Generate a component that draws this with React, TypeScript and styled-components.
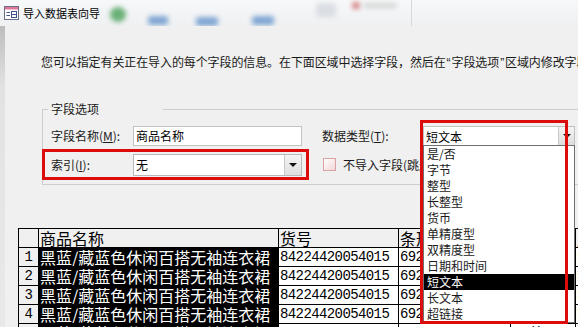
import { FC } from 'react';
import styled, { createGlobalStyle } from 'styled-components';

const GlobalStyle = createGlobalStyle`
  html, body {
    margin: 0;
    padding: 0;
  }
  body {
    background: #f0f0f0;
    font-family: 'Noto Sans CJK SC', 'Liberation Sans', sans-serif;
    color: #000;
  }
`;

const Window = styled.div`
  width: 578px;
  height: 327px;
  overflow: hidden;
  display: flex;
  flex-direction: column;
  background: #f0f0f0;
`;

const TitleBar = styled.div`
  height: 26px;
  flex: none;
  display: flex;
  align-items: center;
  padding-left: 4px;
  background: linear-gradient(#f7f8f9, #eef0f2);
  overflow: hidden;
`;

const TitleText = styled.span`
  font-size: 11px;
  line-height: 14px;
  margin-left: 4px;
  white-space: nowrap;
  position: relative;
  z-index: 1;
`;

const Blob = styled.span<{ $w: number; $h: number; $color: string; $gap: number; $dy: number; $round?: boolean }>`
  flex: none;
  width: ${(p) => p.$w}px;
  height: ${(p) => p.$h}px;
  margin-left: ${(p) => p.$gap}px;
  background: ${(p) => p.$color};
  border-radius: ${(p) => (p.$round ? '50%' : '3px')};
  transform: translateY(${(p) => p.$dy}px);
  filter: blur(2.5px);
  opacity: 0.75;
`;

const RibbonLine = styled.span`
  flex: none;
  width: 1px;
  height: 26px;
  margin-left: 14px;
  background: #d8d8d8;
  filter: blur(0.6px);
`;

const Body = styled.div`
  flex: 1;
  display: flex;
  min-height: 0;
`;

const LeftStrip = styled.div`
  width: 5px;
  flex: none;
  background: linear-gradient(#bdbdbd 0, #cfcfcf 30px, #e2e2e2 60px, #e9e9e9 100%);
`;

const Client = styled.div`
  flex: 1;
  min-width: 0;
  padding-top: 28px;
  overflow: hidden;
  background: #f0f0f0;
`;

const Description = styled.p`
  margin: 0 0 0 36px;
  font-size: 12px;
  line-height: 16px;
  white-space: nowrap;
  color: #1a1a1a;
  letter-spacing: -0.1px;
`;

const Quote = styled.span`
  font-family: 'Liberation Sans', sans-serif;
  margin: 0 1px;
`;

const GroupBox = styled.fieldset`
  margin: 30px 0 0 37px;
  padding: 0 0 4px 0;
  width: 600px;
  min-width: 0;
  border: 1px solid #cdcdcd;
  border-right: none;
  display: flex;
  align-items: flex-start;
`;

const Legend = styled.legend`
  margin-left: 5px;
  padding: 0 64px 0 3px;
  font-size: 12px;
  line-height: 16px;
  color: #1a1a1a;
`;

const LeftCol = styled.div`
  width: 266px;
  display: flex;
  flex-direction: column;
  gap: 3px;
  padding-top: 9px;
`;

const RightCol = styled.div`
  display: flex;
  flex-direction: column;
  gap: 3px;
  padding-top: 9px;
  margin-left: 13px;
`;

const FieldRow = styled.div<{ $pad: number }>`
  display: flex;
  align-items: center;
  height: 20px;
  padding-left: ${(p) => p.$pad}px;
`;

const MarkedRow = styled.div`
  display: flex;
  align-items: center;
  box-sizing: border-box;
  width: 267px;
  height: 31px;
  margin-left: -1px;
  padding-left: 6px;
  border: 3px solid #dc0c0c;
`;

const CheckRow = styled.div`
  display: flex;
  align-items: center;
  height: 31px;
  padding-left: 1px;
`;

const Label = styled.label<{ $w: number }>`
  width: ${(p) => p.$w}px;
  flex: none;
  font-size: 12px;
  line-height: 16px;
  color: #1a1a1a;
  white-space: nowrap;

  u {
    text-decoration: underline;
  }
`;

const TextInput = styled.div`
  box-sizing: border-box;
  width: 169px;
  height: 20px;
  padding-left: 2px;
  background: #fff;
  border: 1px solid #c3c3c3;
  font-size: 12px;
  line-height: 18px;
`;

const Select = styled.div`
  box-sizing: border-box;
  width: 169px;
  height: 22px;
  display: flex;
  align-items: center;
  background: #fff;
  border: 1px solid #b8b8b8;
  font-size: 12px;
`;

const SelectValue = styled.span`
  flex: 1;
  padding-left: 2px;
`;

const ArrowButton = styled.span<{ $w: number }>`
  width: ${(p) => p.$w}px;
  align-self: stretch;
  display: flex;
  align-items: center;
  justify-content: center;
  background: linear-gradient(#f4f4f4, #dedede);
  border-left: 1px solid #c8c8c8;

  &::after {
    content: '';
    border-left: 4px solid transparent;
    border-right: 4px solid transparent;
    border-top: 4px solid #111;
  }
`;

const Combo = styled.div`
  position: relative;
  box-sizing: border-box;
  width: 152px;
  height: 20px;
  display: flex;
  align-items: center;
  background: #fff;
  border: 1px solid #c0c0c0;
  font-size: 12px;
`;

const DropList = styled.ul`
  position: absolute;
  top: 18px;
  left: -1px;
  z-index: 3;
  box-sizing: border-box;
  width: 152px;
  margin: 0;
  padding: 0;
  list-style: none;
  background: #fff;
  border: 1px solid #707070;
`;

const DropItem = styled.li<{ $active?: boolean }>`
  height: 16px;
  padding-left: 3px;
  font-size: 12px;
  line-height: 16px;
  white-space: nowrap;
  background: ${(p) => (p.$active ? '#000' : '#fff')};
  color: ${(p) => (p.$active ? '#fff' : '#1a1a1a')};
`;

const Marker = styled.div`
  position: absolute;
  left: -4px;
  top: -7px;
  z-index: 4;
  box-sizing: border-box;
  width: 148px;
  height: 204px;
  border: 3px solid #dc0c0c;
  pointer-events: none;
`;

const CheckBox = styled.span`
  width: 11px;
  height: 11px;
  flex: none;
  border: 1px solid #d9a3a3;
  background: linear-gradient(135deg, #fff 0%, #f8e6e6 60%, #f3d8d8 100%);
`;

const CheckLabel = styled.span`
  margin-left: 7px;
  font-size: 12px;
  white-space: nowrap;
  color: #1a1a1a;
`;

const Grid = styled.table`
  margin: 43px 0 0 13px;
  border-collapse: collapse;
  table-layout: fixed;
  width: 637px;
  background: #fff;
`;

type CellKind = 'head' | 'num' | 'sel' | 'plain';

const Cell = styled.td<{ $kind: CellKind }>`
  padding: 0 1px;
  border: 1px solid #000;
  background: ${(p) => (p.$kind === 'head' || p.$kind === 'num' ? '#f0f0f0' : p.$kind === 'sel' ? '#000' : '#fff')};
  color: ${(p) => (p.$kind === 'sel' ? '#fff' : '#000')};
  text-align: ${(p) => (p.$kind === 'num' ? 'center' : 'left')};
`;

const CellText = styled.div<{ $mono?: boolean }>`
  height: 18px;
  overflow: hidden;
  white-space: nowrap;
  font-family: ${(p) => (p.$mono ? "'Liberation Mono', monospace" : "'Noto Sans CJK SC', sans-serif")};
  font-size: ${(p) => (p.$mono ? 14 : 16)}px;
  letter-spacing: ${(p) => (p.$mono ? -0.6 : 0)}px;
  line-height: 19px;
`;

const columns = [20, 240, 120, 112, 65, 80];
const types = ['是/否', '字节', '整型', '长整型', '货币', '单精度型', '双精度型', '日期和时间', '短文本', '长文本', '超链接'];
const rows = [1, 2, 3, 4, 5];

const WindowIcon: FC = () => (
  <svg width="15" height="14" viewBox="0 0 15 14">
    <rect x="0.5" y="0.5" width="14" height="13" fill="#fff" stroke="#6b6f86" />
    <rect x="1" y="1" width="13" height="2.5" fill="#e0779a" />
    <line x1="2.5" y1="6.5" x2="6" y2="6.5" stroke="#3d4f8f" />
    <line x1="2.5" y1="9.5" x2="6" y2="9.5" stroke="#3d4f8f" />
    <rect x="7.5" y="5.5" width="5" height="6" fill="none" stroke="#3d4f8f" />
    <line x1="7.5" y1="8.5" x2="12.5" y2="8.5" stroke="#3d4f8f" />
  </svg>
);

const App: FC = () => {
  return (
    <Window>
      <GlobalStyle />
      <TitleBar>
        <WindowIcon />
        <TitleText>导入数据表向导</TitleText>
        <Blob $w={16} $h={15} $color="#3c9a4c" $gap={10} $dy={1} $round />
        <Blob $w={20} $h={9} $color="#5a8dc8" $gap={22} $dy={7} />
        <Blob $w={22} $h={9} $color="#5a8dc8" $gap={28} $dy={8} />
        <Blob $w={22} $h={9} $color="#5a8dc8" $gap={34} $dy={7} />
        <Blob $w={20} $h={14} $color="#d2d7dd" $gap={42} $dy={-3} />
        <Blob $w={8} $h={7} $color="#c85b5b" $gap={16} $dy={-8} />
        <Blob $w={34} $h={5} $color="#c9c9c9" $gap={3} $dy={-8} />
        <RibbonLine />
      </TitleBar>
      <Body>
        <LeftStrip />
        <Client>
          <Description>
            您可以指定有关正在导入的每个字段的信息。在下面区域中选择字段，然后在<Quote>“</Quote>字段选项
            <Quote>”</Quote>区域内修改字段信息。
          </Description>
          <GroupBox>
            <Legend>字段选项</Legend>
            <LeftCol>
              <FieldRow $pad={8}>
                <Label $w={82}>
                  字段名称(<u>M</u>):
                </Label>
                <TextInput>商品名称</TextInput>
              </FieldRow>
              <MarkedRow>
                <Label $w={82}>
                  索引(<u>I</u>):
                </Label>
                <Select>
                  <SelectValue>无</SelectValue>
                  <ArrowButton $w={16} />
                </Select>
              </MarkedRow>
            </LeftCol>
            <RightCol>
              <FieldRow $pad={0}>
                <Label $w={101}>
                  数据类型(<u>T</u>):
                </Label>
                <Combo>
                  <SelectValue>短文本</SelectValue>
                  <ArrowButton $w={15} />
                  <DropList>
                    {types.map((t) => (
                      <DropItem key={t} $active={t === '短文本'}>
                        {t}
                      </DropItem>
                    ))}
                  </DropList>
                  <Marker />
                </Combo>
              </FieldRow>
              <CheckRow>
                <CheckBox />
                <CheckLabel>不导入字段(跳过)(S)</CheckLabel>
              </CheckRow>
            </RightCol>
          </GroupBox>
          <Grid>
            <colgroup>
              {columns.map((w, i) => (
                <col key={i} style={{ width: w }} />
              ))}
            </colgroup>
            <tbody>
              <tr>
                <Cell $kind="head" />
                <Cell $kind="head">
                  <CellText>商品名称</CellText>
                </Cell>
                <Cell $kind="head">
                  <CellText>货号</CellText>
                </Cell>
                <Cell $kind="head">
                  <CellText>条形码</CellText>
                </Cell>
                <Cell $kind="head">
                  <CellText>颜色</CellText>
                </Cell>
                <Cell $kind="head">
                  <CellText>尺码</CellText>
                </Cell>
              </tr>
              {rows.map((n) => (
                <tr key={n}>
                  <Cell $kind="num">
                    <CellText $mono>{n}</CellText>
                  </Cell>
                  <Cell $kind="sel">
                    <CellText>黑蓝/藏蓝色休闲百搭无袖连衣裙</CellText>
                  </Cell>
                  <Cell $kind="plain">
                    <CellText $mono>84224420054015</CellText>
                  </Cell>
                  <Cell $kind="plain">
                    <CellText $mono>6922442005401</CellText>
                  </Cell>
                  <Cell $kind="plain">
                    <CellText>黑蓝</CellText>
                  </Cell>
                  <Cell $kind="plain">
                    <CellText $mono>5</CellText>
                  </Cell>
                </tr>
              ))}
            </tbody>
          </Grid>
        </Client>
      </Body>
    </Window>
  );
};

export default App;
